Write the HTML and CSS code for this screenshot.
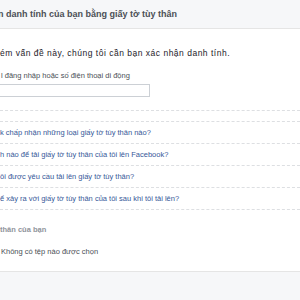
FILE: index.html
```html
<!DOCTYPE html>
<html lang="vi">
<head>
  <meta charset="UTF-8" />
  <title>Xác nhận danh tính</title>
  <link rel="stylesheet" href="styles.css">
</head>
<body>
  <header class="top">
    <h2 class="title">n danh tính của bạn bằng giấy tờ tùy thân</h2>
  </header>

  <main class="content">
    <section class="form">
      <p class="intro">ém vấn đề này, chúng tôi cần bạn xác nhận danh tính.</p>
      <label class="field-label" for="login">l đăng nhập hoặc số điện thoại di động</label>
      <input class="field" id="login" type="text">
    </section>

    <ul class="faq">
      <li><a href="#">k chấp nhận những loại giấy tờ tùy thân nào?</a></li>
      <li><a href="#">h nào để tải giấy tờ tùy thân của tôi lên Facebook?</a></li>
      <li><a href="#">ôi được yêu cầu tải lên giấy tờ tùy thân?</a></li>
      <li><a href="#">ể xảy ra với giấy tờ tùy thân của tôi sau khi tôi tải lên?</a></li>
    </ul>

    <p class="upload-label">thân của bạn</p>
    <p class="upload-file">Không có tệp nào được chọn</p>
  </main>

  <footer class="bottom"></footer>
</body>
</html>
```

FILE: styles.css
```css
body {
  font-family: "Liberation Sans", Arial, sans-serif;
  margin: 0;
  padding: 0;
  background: #fff;
  overflow: hidden;
  height: 300px;
}
.top {
  background-color: #f6f7f9;
  border-bottom: 1px solid #e5e5e5;
  height: 28px;
  display: flex;
  align-items: center;
}
.title {
  margin: 0 0 0 -2px;
  font-size: 9px;
  font-weight: bold;
  color: #4b4f56;
}
.content {
  padding: 0;
  height: 242px;
}
.form {
  border-bottom: 1px dashed #dddfe2;
  padding-bottom: 13px;
}
.intro {
  margin: 0;
  padding-top: 18px;
  font-size: 8.5px;
  letter-spacing: 0.5px;
  color: #1d2129;
  line-height: 12px;
}
.field-label {
  display: block;
  margin-top: 12px;
  margin-left: 1px;
  font-size: 7.5px;
  color: #4b4f56;
  line-height: 10px;
}
.field {
  display: block;
  box-sizing: border-box;
  margin: 3px 0 0 -2px;
  width: 152px;
  height: 13px;
  border: 1px solid #ccd0d5;
  padding: 0;
}
.faq {
  list-style: none;
  margin: 10px 0 0 0;
  padding: 0;
  border-top: 1px dashed #dddfe2;
  font-size: 7.5px;
}
.faq li {
  border-bottom: 1px dashed #dddfe2;
  padding: 6px 0 5px;
  line-height: 10px;
}
.faq a {
  color: #365899;
  text-decoration: none;
}
.upload-label {
  margin: 15px 0 0 0;
  font-size: 7.5px;
  font-weight: bold;
  color: #90949c;
  line-height: 10px;
}
.upload-file {
  margin: 12px 0 0 1px;
  font-size: 7.5px;
  color: #4b4f56;
  line-height: 10px;
}
.bottom {
  background-color: #f6f7f9;
  border-top: 1px solid #e5e5e5;
  height: 30px;
}
```
